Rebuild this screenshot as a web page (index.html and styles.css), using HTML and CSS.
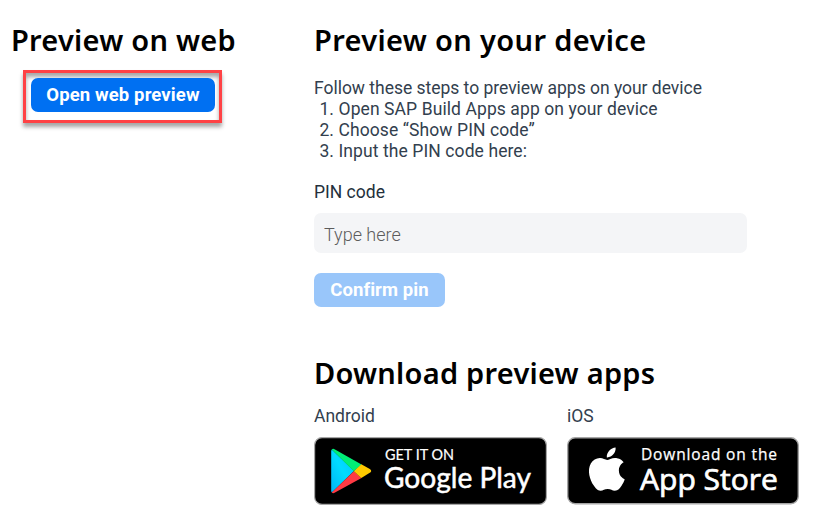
FILE: index.html
```html
<!DOCTYPE html>
<html lang="en">
<head>
<meta charset="utf-8">
<title>Preview</title>
<link rel="stylesheet" href="styles.css">
</head>
<body>
<main class="page">
  <section class="web">
    <h2 class="title title-web">Preview on web</h2>
    <div class="highlight"><button class="btn btn-open"><span>Open web preview</span></button></div>
  </section>
  <section class="device">
    <h2 class="title title-device">Preview on your device</h2>
    <p class="intro">Follow these steps to preview apps on your device</p>
    <ol class="steps">
      <li>Open SAP Build Apps app on your device</li>
      <li>Choose “Show PIN code”</li>
      <li>Input the PIN code here:</li>
    </ol>
    <label class="label" for="pin">PIN code</label>
    <input class="field" id="pin" type="text" placeholder="Type here">
    <button class="btn btn-confirm"><span>Confirm pin</span></button>
    <h2 class="title title-download">Download preview apps</h2>
    <div class="stores">
      <div class="store">
        <span class="store-name">Android</span>
        <svg class="badge" width="233" height="68" viewBox="0 0 233 68">
          <defs>
            <linearGradient id="blue" x1="1" y1="0" x2="0" y2="1"><stop offset="0" stop-color="#00c3ff"/><stop offset=".5" stop-color="#00dcff"/><stop offset="1" stop-color="#00b4f5"/></linearGradient>
          </defs>
          <rect x=".6" y=".6" width="231.8" height="66.8" rx="7.5" fill="#000" stroke="#a6a6a6" stroke-width="1.2"/>
          <path d="M17.8 12.4Q17.2 13 17.2 14.5V53.5Q17.2 55 17.8 55.6L40 34Z" fill="url(#blue)"/>
          <path d="M47.5 27.4L21 12.5Q19 11.3 17.8 12.4L39.8 34.2Z" fill="#00ee76"/>
          <path d="M47.5 41L21 55.6Q19 56.8 17.8 55.6L39.8 34.2Z" fill="#ff3a44"/>
          <path d="M47.3 27.2L55.8 32Q58.6 34 55.8 35.8L47.3 41L39.8 34.2Z" fill="#ffc900"/>
          <text class="play-small" x="71" y="22.5" textLength="69" lengthAdjust="spacingAndGlyphs">GET IT ON</text>
          <text class="play-large" x="70" y="51" textLength="147" lengthAdjust="spacingAndGlyphs">Google Play</text>
        </svg>
      </div>
      <div class="store">
        <span class="store-name">iOS</span>
        <svg class="badge" width="232" height="68" viewBox="0 0 232 68">
          <rect x=".7" y=".7" width="230.6" height="66" rx="7.5" fill="#000" stroke="#a6a6a6" stroke-width="1.4"/>
          <path fill="#fff" transform="translate(17.9 10.4) scale(1.83 1.81)" d="M12.152 6.896c-.948 0-2.415-1.078-3.96-1.04-2.04.027-3.91 1.183-4.961 3.014-2.117 3.675-.546 9.103 1.519 12.09 1.013 1.454 2.208 3.09 3.792 3.039 1.52-.065 2.09-.987 3.935-.987 1.831 0 2.35.987 3.96.948 1.637-.026 2.676-1.48 3.676-2.948 1.156-1.688 1.636-3.325 1.662-3.415-.039-.013-3.182-1.221-3.22-4.857-.026-3.04 2.48-4.494 2.597-4.559-1.429-2.09-3.623-2.324-4.39-2.376-2-.156-3.675 1.09-4.61 1.09zM15.53 3.83c.843-1.012 1.4-2.427 1.245-3.83-1.207.052-2.662.805-3.532 1.818-.78.896-1.454 2.338-1.273 3.714 1.338.104 2.715-.688 3.559-1.701"/>
          <text class="apple-small" x="74" y="23" textLength="136">Download on the</text>
          <text class="apple-large" x="73" y="53" textLength="138" lengthAdjust="spacingAndGlyphs">App Store</text>
        </svg>
      </div>
    </div>
  </section>
</main>
</body>
</html>
```
FILE: styles.css
```css
* { box-sizing: border-box; }

body {
  margin: 0;
  background: #fff;
  color: #32404e;
  font: 17.5px/21px Roboto, sans-serif;
}

.page {
  display: grid;
  grid-template-columns: 303px 1fr;
  width: 821px;
  height: 523px;
  padding: 20px 22px 0 11px;
  overflow: hidden;
}

.title {
  margin: 0;
  color: #000;
  font: 600 29px/40px "Noto Sans", sans-serif;
  letter-spacing: .25px;
  white-space: nowrap;
}

.title-device { letter-spacing: .35px; }

.highlight {
  width: 199px;
  height: 53px;
  margin: 10px 0 0 12px;
  padding: 5px;
  border: 3px solid #ff4245;
  box-shadow: 0 4px 4px rgba(0, 0, 0, .35), inset 0 4px 4px rgba(0, 0, 0, .35);
}

.btn {
  display: flex;
  align-items: center;
  justify-content: center;
  height: 34px;
  padding: 0;
  border: 0;
  border-radius: 7px;
  color: #fff;
  font: 700 18.5px/34px Roboto, sans-serif;
  white-space: nowrap;
}

.btn-open { width: 184px; background: #0070f2; letter-spacing: .12px; }
.btn-confirm { width: 131px; margin-top: 20px; background: #99c6fa; letter-spacing: .1px; }

.intro { margin: 18px 0 0; letter-spacing: -.02px; }
.steps { margin: 0; padding: 0 0 0 24.5px; letter-spacing: .09px; }
.label { display: block; margin: 20px 0 0; color: #24303c; }

.field {
  display: block;
  width: 433px;
  height: 40px;
  margin-top: 10px;
  padding: 3px 10px 0;
  border: 0;
  border-radius: 7px;
  background: #f4f5f7;
  font: 300 18px/30px Roboto, sans-serif;
}

.field::placeholder { color: #5c5c5c; }

.title-download { margin-top: 46px; }

.stores {
  display: grid;
  grid-template-columns: 233px 232px;
  column-gap: 20px;
  margin-top: 13px;
}

.store-name { display: block; }
.badge { display: block; margin-top: 10px; }
.badge text { fill: #fff; }
.play-small { font: 400 15px Lato, sans-serif; stroke: #fff; stroke-width: .2px; }
.play-large { font: 400 28px Lato, sans-serif; stroke: #fff; stroke-width: .5px; }
.apple-small { font: 500 15.5px "Open Sans", sans-serif; stroke: #fff; stroke-width: .25px; }
.apple-large { font: 500 29.5px "Open Sans", sans-serif; stroke: #fff; stroke-width: .7px; }
```
